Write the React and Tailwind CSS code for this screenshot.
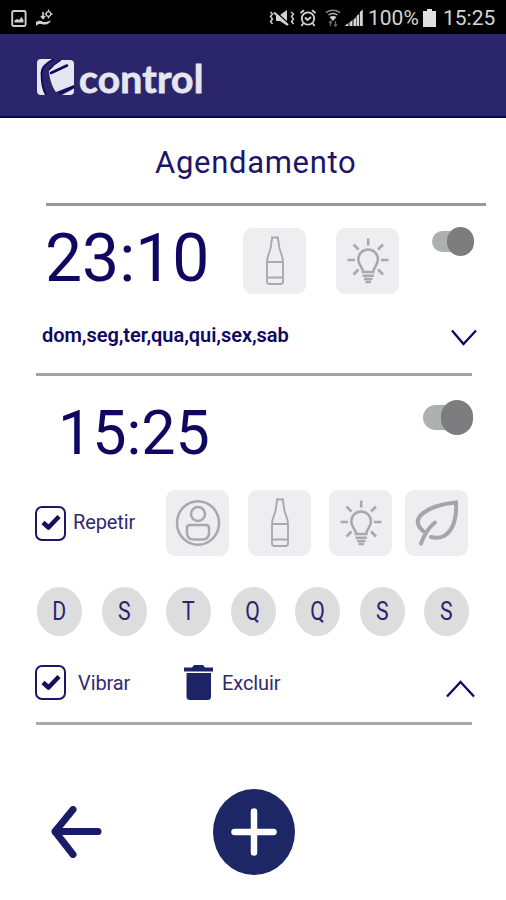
import { useState } from 'react';

const DAYS = ['D', 'S', 'T', 'Q', 'Q', 'S', 'S'];

function Logo() {
  return (
    <svg className="w-[37px] h-9 shrink-0" viewBox="0 0 37 36">
      <path d="M4 0H17C9 4 4.5 8 4.5 14C4.5 22 5.5 30 9 36H4Q0 36 0 32V4Q0 0 4 0Z" fill="#e6e6ee" />
      <path d="M24 1H33Q37 1 37 5V26L19 33C15 28 12 18 12 11Q17 5 24 1Z" fill="#e6e6ee" />
      <path d="M37 29.5V32Q37 36 33 36H25Z" fill="#e6e6ee" />
      <path d="M17 0C9 4 4.5 8 4.5 14C4.5 22 5.5 30 9 36" fill="none" stroke="#0f0560" strokeWidth="1.8" />
      <path d="M12 11Q17 5 24 1" fill="none" stroke="#0f0560" strokeWidth="1.2" />
      <path d="M14 14L30 6.5" fill="none" stroke="#0f0560" strokeWidth="2.6" strokeLinecap="round" />
      <path d="M22 34.5L37 27.5" fill="none" stroke="#0f0560" strokeWidth="2.4" />
    </svg>
  );
}

function StatusBar() {
  return (
    <div className="h-[34px] bg-black flex items-center pl-[11px] pr-[10px] pt-0.5 text-[#d4d4d4]">
      <svg className="w-4 h-[17px]" viewBox="0 0 16 17" fill="none" stroke="#cfcfcf" strokeWidth="1.9">
        <rect x="1.2" y="1" width="13.4" height="15" rx="1.5" />
        <path d="M3.5 12.5V10.5L6 9L8 10L10.5 7L12.5 10V12.5Z" fill="#cfcfcf" stroke="none" />
      </svg>
      <svg className="w-[18px] h-[18px] ml-2" viewBox="0 0 18 18" fill="none" stroke="#cfcfcf">
        <path d="M1 17V13C4 11 6 11.5 8 13H11L16 11.5C14 15 11 16 8 15.5C5 14.5 3 15 1 17Z" fill="#cfcfcf" stroke="none" />
        <path d="M8 3V9M6 7L8 9.5L10 7" strokeWidth="1.6" />
        <circle cx="13.5" cy="5" r="2.3" strokeWidth="1.2" />
        <path d="M13.5 0.5V2M13.5 8V9.5M9.8 5H11M16 5H17.5" strokeWidth="1.3" />
      </svg>
      <svg className="w-[26px] h-[18px] ml-auto" viewBox="0 0 26 18" fill="none" stroke="#d4d4d4">
        <path d="M7 6H11L18 1V16.5L11 12H7Z" fill="#d4d4d4" stroke="none" />
        <path d="M6 2L20 15" stroke="#000" strokeWidth="1.6" />
        <path d="M5 3.5L19 16" strokeWidth="2.2" />
        <path d="M1.5 3L3.5 5L1.5 7.5L3.5 10L1.5 12.5L3.5 15M22 3L24.5 5L22.5 7.5L24.5 10L22.5 12.5L24.5 15" strokeWidth="1.4" />
      </svg>
      <svg className="w-[18px] h-[18px] ml-1" viewBox="0 0 18 18" fill="none" stroke="#d4d4d4" strokeWidth="1.8">
        <circle cx="9" cy="9.5" r="6.2" />
        <path d="M1.5 4L5 1.3M16.5 4L13 1.3M4 14.5L2.5 17M14 14.5L15.5 17M6 8.5L8.5 11L12 8" />
      </svg>
      <svg className="w-4 h-[18px] ml-2" viewBox="0 0 16 18" fill="none" stroke="#bdbdbd" strokeWidth="1.5">
        <path d="M1 3.5Q8 -1 15 3.5" stroke="#8a8a8a" />
        <path d="M3.5 6Q8 3 12.5 6" />
        <path d="M4.5 8Q8 6 11.5 8L8 12Z" fill="#d4d4d4" stroke="none" />
        <path d="M5.5 12V17M10.5 12V17M4 14L5.5 12L7 14M9 15.5L10.5 17L12 15.5" stroke="#666" strokeWidth="1.3" />
      </svg>
      <svg className="w-[18px] h-[18px] ml-1" viewBox="0 0 18 18" fill="#d4d4d4">
        <path d="M0 17H3.5V14L0 16.5ZM4.5 17H7.5V11L4.5 13.5ZM8.5 17H11V8.5L8.5 10.5ZM11.5 17H14V5L11.5 7ZM14.8 17H17.8V0.5L14.8 3Z" />
      </svg>
      <span className="ml-[5px] w-[50px] text-[21px] leading-none whitespace-nowrap">100%</span>
      <svg className="w-[13px] h-[18px] ml-[5px]" viewBox="0 0 13 18" fill="#e0e0e0">
        <path d="M4 0H9V2H13V18H0V2H4Z" />
      </svg>
      <span className="ml-[7px] w-[53px] text-[21px] leading-none whitespace-nowrap">15:25</span>
    </div>
  );
}

function BottleIcon() {
  return (
    <svg className="w-5 h-[50px]" viewBox="0 0 20 50" fill="none" stroke="#a9a9ae" strokeWidth="1.9">
      <path d="M7 1.5H13V4L13.5 5C13.5 16 18 18 18 26V45.5Q18 48 15.5 48H4.5Q2 48 2 45.5V26C2 18 6.5 16 6.5 5L7 4Z" />
      <path d="M2 26H18M2 41.5H18" />
    </svg>
  );
}

function BulbIcon() {
  return (
    <svg className="w-[42px] h-[46px]" viewBox="0 0 42 46" fill="none" stroke="#a9a9ad" strokeWidth="2.6">
      <path d="M16 34C16 29 11.3 27.5 11.3 21.5A9.8 10 0 0 1 30.9 21.5C30.9 27.5 26.3 29 26.3 34Z" />
      <path d="M15.5 37.7H27M17 41H25.5M18.5 44H24" strokeWidth="2.4" />
      <path d="M21.2 0.5V7.5M0.5 22H8M34 22H41.5M6.5 6.5L11.5 11.5M36 6.5L31 11.5M6.5 36.5L11.5 31.5M36 36.5L31 31.5" />
    </svg>
  );
}

function PersonIcon() {
  return (
    <svg className="w-[46px] h-12" viewBox="0 0 46 48" fill="none" stroke="#a9a9ad" strokeWidth="2.5">
      <ellipse cx="23" cy="24" rx="21" ry="21.8" />
      <circle cx="23" cy="15" r="7" />
      <path d="M15 26H31Q34 26 34 29V34C34 38.5 31 40.5 27 40.5H19C15 40.5 12 38.5 12 34V29Q12 26 15 26Z" />
    </svg>
  );
}

function LeafIcon() {
  return (
    <svg className="w-11 h-[46px]" viewBox="0 0 44 46" fill="none" stroke="#a6a6a9" strokeWidth="4" strokeLinecap="round">
      <path d="M8 31C2 26 1 20 6 15C13 8 27 3.5 41 2.5C42 16 39 30 29 36C25 38 20 38 16 37" />
      <path d="M6 43.5C9 35 13 28 20 22.5" />
    </svg>
  );
}

function Tile({ children }) {
  return (
    <div className="w-[63px] h-[66px] rounded-[9px] bg-[#eeeef1] flex items-center justify-center shrink-0">{children}</div>
  );
}

function CheckBox({ checked, onClick }) {
  return (
    <button onClick={onClick} className="w-[31px] h-[35px] rounded-[7px] border-2 border-[#1b1666] flex items-center justify-center shrink-0">
      {checked && (
        <svg className="w-5 h-[18px]" viewBox="0 0 20 18" fill="none" stroke="#15105e" strokeWidth="4.6">
          <path d="M2 8.5L7.5 13.5L18 2.5" strokeLinejoin="round" />
        </svg>
      )}
    </button>
  );
}

export default function App() {
  const [repeat, setRepeat] = useState(true);
  const [vibrate, setVibrate] = useState(true);

  return (
    <div className="w-[506px] h-[900px] overflow-hidden bg-white text-[#100860] font-['Roboto',sans-serif]">
      <StatusBar />
      <header className="h-[84px] bg-[#2b266b] border-b-2 border-[#0d0458] flex items-center pl-[37px] pt-1">
        <Logo />
        <span className="ml-[5px] pt-[3px] text-[39px] leading-none font-bold tracking-[0.2px] text-[#e6e6ee] font-['Lato',sans-serif] [-webkit-text-stroke:0.8px_#e6e6ee]">control</span>
      </header>

      <h1 className="h-[85px] pt-[27px] pl-[155px] text-[31px] leading-9 tracking-[0.7px] text-[#1c1568]">Agendamento</h1>
      <hr className="ml-[46px] w-[440px] border-0 h-[3px] bg-[#98989a]" />

      {/* Collapsed alarm */}
      <section className="h-[167px]">
        <div className="flex items-start pt-[22px] h-[110px]">
          <span className="ml-[45px] w-[198px] mt-[-8px] text-[66px] leading-[78px]">23:10</span>
          <Tile><BottleIcon /></Tile>
          <div className="w-[30px]" />
          <Tile><BulbIcon /></Tile>
          <div className="ml-[33px] mt-[-1px] flex items-center">
            <div className="w-[30px] h-[21px] rounded-full bg-[#adb0b0]" />
            <div className="w-[27px] h-[29px] -ml-[15px] rounded-full bg-[#7d7d80]" />
          </div>
        </div>
        <div className="flex items-center pl-[42px]">
          <span className="w-[409px] h-[38px] text-[20px] leading-[38px] font-semibold tracking-[-0.05px]">dom,seg,ter,qua,qui,sex,sab</span>
          <svg className="w-[26px] h-[18px] mt-[5px]" viewBox="0 0 26 18" fill="none" stroke="#100860" strokeWidth="2.3">
            <path d="M1 1.5L12.5 15L25 1.5" />
          </svg>
        </div>
      </section>
      <hr className="ml-9 w-[436px] border-0 h-[3px] bg-[#a3a3a5]" />

      {/* Expanded alarm */}
      <section className="h-[346px]">
        <div className="h-[114px] flex items-start">
          <span className="ml-[58px] w-[365px] mt-[21px] text-[61px] leading-[72px]">15:25</span>
          <div className="mt-6 flex items-center">
            <div className="w-9 h-[25px] rounded-full bg-[#adb0b0]" />
            <div className="w-8 h-[35px] -ml-[18px] rounded-full bg-[#7d7d80]" />
          </div>
        </div>
        <div className="h-[66px] flex items-center pl-[35px]">
          <CheckBox checked={repeat} onClick={() => setRepeat(!repeat)} />
          <span className="ml-[7px] w-[93px] text-[20px] leading-none pb-0.5 tracking-[-0.1px] text-[#2f2974]">Repetir</span>
          <Tile><PersonIcon /></Tile>
          <div className="w-[19px]" />
          <Tile><BottleIcon /></Tile>
          <div className="w-[18px]" />
          <Tile><BulbIcon /></Tile>
          <div className="w-[13px]" />
          <Tile><LeafIcon /></Tile>
        </div>
        <div className="mt-[31px] mx-[37px] flex justify-between">
          {DAYS.map((day, i) => (
            <button key={i} className="w-[45px] h-[49px] rounded-[50%] bg-[#dddddd] flex items-center justify-center text-[25px] leading-none text-[#2a246f]">
              <span className="scale-x-85">{day}</span>
            </button>
          ))}
        </div>
        <div className="mt-[29px] flex items-center pl-[35px]">
          <CheckBox checked={vibrate} onClick={() => setVibrate(!vibrate)} />
          <span className="ml-3 w-[106px] text-[20px] leading-none tracking-[-0.1px] text-[#2f2974]">Vibrar</span>
          <svg className="w-[29px] h-[35px]" viewBox="0 0 29 35" fill="#1d2466">
            <path d="M0 2.5H8L10 0H19L21 2.5H29V6.5H0Z" />
            <path d="M2.5 8H27V31.5Q27 35 23.5 35H6Q2.5 35 2.5 31.5Z" />
          </svg>
          <span className="ml-[9px] w-[224px] text-[20px] leading-none tracking-[-0.1px] text-[#2f2974]">Excluir</span>
          <svg className="w-[29px] h-[18px] mt-3" viewBox="0 0 29 18" fill="none" stroke="#100860" strokeWidth="2.3">
            <path d="M1 16.5L14.5 2L28 16.5" />
          </svg>
        </div>
      </section>
      <hr className="ml-9 w-[436px] border-0 h-[3px] bg-[#a9a9ab]" />

      <footer className="flex items-center pt-[64px] pl-[51px]">
        <button>
          <svg className="w-[51px] h-[52px]" viewBox="0 0 51 52" fill="none" stroke="#1a1c66" strokeWidth="7" strokeLinecap="round" strokeLinejoin="round">
            <path d="M22 3.5L4 25.5L22 48.5M4 25.5H47" />
          </svg>
        </button>
        <button className="ml-[111px] w-[82px] h-[86px] rounded-[50%] bg-[#1d2766] flex items-center justify-center">
          <svg className="w-[47px] h-12" viewBox="0 0 47 48" stroke="#fff" strokeWidth="6.5" strokeLinecap="round">
            <path d="M23 3.5V44.5M3.5 24H42.5" />
          </svg>
        </button>
      </footer>
    </div>
  );
}
